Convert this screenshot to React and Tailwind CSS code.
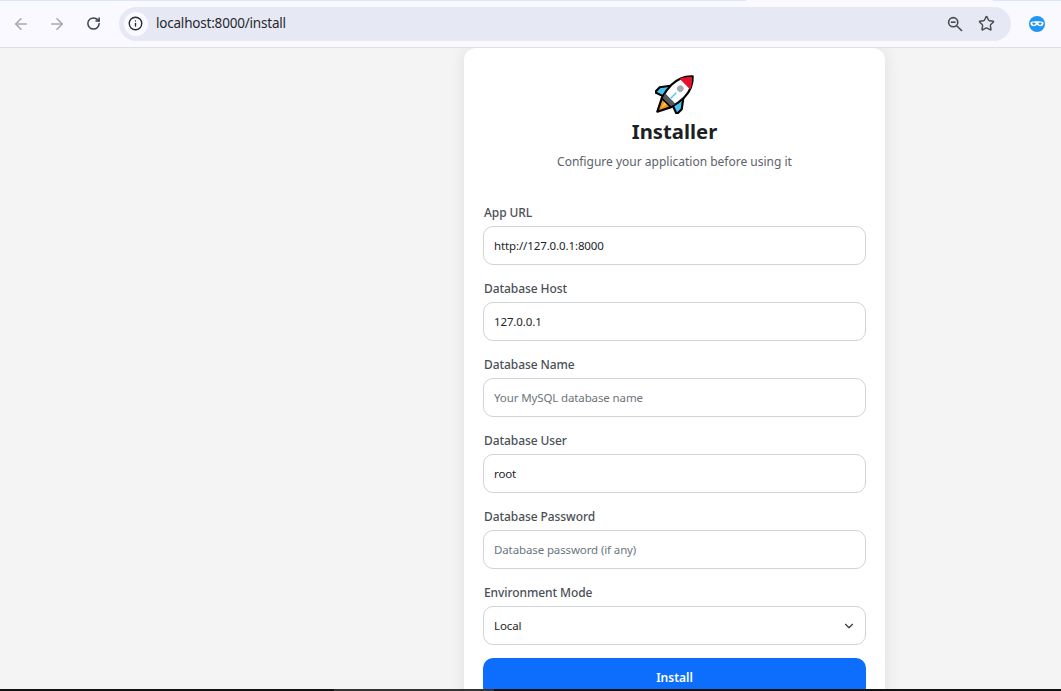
import React from "react";
import { ArrowLeft, ArrowRight, RotateCw, Info, Star, ChevronDown } from "lucide-react";

const Rocket = () => (
  <svg width="40" height="40" viewBox="0 0 40 40" className="block">
    <g transform="rotate(45 20 20)" stroke="#000" strokeWidth="2.200" strokeLinejoin="round">
      <path d="M20 45 L13.500 32 L26.500 32 Z" fill="#f7931e" />
      <path d="M20 39 L18 33 L22 33 Z" fill="#ffc83d" stroke="none" />
      <path d="M12 16 L4.500 26 L4.500 33 L13 30 Z" fill="#45c3f2" />
      <path d="M28 16 L35.500 26 L35.500 33 L27 30 Z" fill="#45c3f2" />
      <path d="M20 -5 C26.500 1 29 8 29 16 C29 22 28 27 26.500 32 L13.500 32 C12 27 11 22 11 16 C11 8 13.500 1 20 -5 Z" fill="#fff" />
      <path d="M20 -4 C24 -0.500 26.500 3 27.500 6 L12.500 6 C13.500 3 16 -0.500 20 -4 Z" fill="#e8112d" stroke="none" />
      <path d="M12.800 26.500 L27.200 26.500 L26 31.500 L14 31.500 Z" fill="#55585c" stroke="none" />
      <path d="M20 18 L20 26" stroke="#45c3f2" strokeWidth="1.300" fill="none" />
      <circle cx="20" cy="12.500" r="3.300" fill="#a8abae" stroke="none" />
    </g>
  </svg>
);

const NinjaIcon = () => (
  <svg width="16" height="16" viewBox="0 0 16 16" className="block">
    <circle cx="8" cy="8" r="8" fill="#2196f3" />
    <path d="M1.500 6.200 C4 4.800 12 4.800 14.500 6.200 C15 8.500 13.500 10.300 11.200 10.300 C9.800 10.300 9 9 8 9 C7 9 6.200 10.300 4.800 10.300 C2.500 10.300 1 8.500 1.500 6.200 Z" fill="#fff" />
    <ellipse cx="4.900" cy="7.600" rx="1.600" ry="1.200" fill="#2196f3" />
    <ellipse cx="11.100" cy="7.600" rx="1.600" ry="1.200" fill="#2196f3" />
  </svg>
);

// chrome's zoom glyph, smaller lens than the lucide one
const ZoomGlyph = () => (
  <svg width="16" height="16" viewBox="0 0 16 16" fill="none" stroke="#474a50" strokeWidth="1.600" className="block ml-auto">
    <circle cx="6.200" cy="6.200" r="4.600" />
    <path d="M9.700 9.700 L15 15" />
    <path d="M3.800 6.200 L8.600 6.200" />
  </svg>
);

const Field = ({ label, children }) => (
  <div className="flex flex-col">
    <label className="pl-[1px] text-[12px] leading-[18px] font-medium tracking-[-0.08px] text-[#495057] mb-[4px]">{label}</label>
    {children}
  </div>
);

const TextInput = ({ value, placeholder }) => (
  <input
    type="text"
    readOnly
    value={value}
    placeholder={placeholder}
    className="w-full h-[39px] px-[10px] bg-white border border-[#ced4da] rounded-[10px] text-[11.500px] tracking-[-0.12px] text-[#212529] placeholder:text-[#6c757d] outline-none"
  />
);

export default function App() {
  return (
    <div className="h-[691px] overflow-hidden flex flex-col bg-[#f4f4f4] font-['Noto_Sans','Open_Sans',sans-serif]">
      {/* browser toolbar */}
      <div className="relative h-[48px] shrink-0 bg-[#f9f9ff] border-b border-[#dfe0e4] flex items-center pl-[12px] pr-[16px]">
        <div className="absolute left-0 top-0 h-[1px] w-[746px] bg-[#dce6fb]" />
        <div className="absolute right-0 top-0 h-[1px] w-[68px] bg-[#dce6fb]" />
        <ArrowLeft size={18} strokeWidth={2.200} className="text-[#a9abb0]" />
        <ArrowRight size={18} strokeWidth={2.200} className="text-[#a9abb0] ml-[18px]" />
        <RotateCw size={15} strokeWidth={2.400} className="text-[#3c4350] ml-[20px]" />
        <div className="ml-[18px] h-[34px] w-[893px] rounded-full bg-[#e6e9f4] flex items-center pl-[5px] pr-[16px]">
          <div className="w-[24px] h-[24px] rounded-full bg-[#f9f9ff] flex items-center justify-center">
            <Info size={15} strokeWidth={2.200} className="text-[#272a30]" />
          </div>
          <span className="ml-[8px] text-[13.500px] tracking-[-0.2px] text-[#26282d]">localhost:8000/install</span>
          <ZoomGlyph />
          <Star size={17} strokeWidth={2} className="ml-[15px] text-[#474a50]" />
        </div>
        <div className="ml-[18px]">
          <NinjaIcon />
        </div>
      </div>

      {/* page */}
      <div className="relative flex-1 min-h-0 flex justify-center overflow-hidden pl-[288px]">
        <div className="w-[421px] h-[700px] shrink-0 bg-white rounded-t-[12px] shadow-[0_0_16px_rgba(0,0,0,0.09)] px-[19px] pt-[26px]">
          <div className="flex flex-col items-center">
            <Rocket />
            <h1 className="mt-[3px] text-[20.300px] leading-[28px] font-bold text-[#1c1f23]">Installer</h1>
            <p className="mt-[8px] text-[12px] leading-[18px] text-[#5c636a]">Configure your application before using it</p>
          </div>
          <div className="mt-[33px] flex flex-col gap-[15px]">
            <Field label="App URL">
              <TextInput value="http://127.0.0.1:8000" />
            </Field>
            <Field label="Database Host">
              <TextInput value="127.0.0.1" />
            </Field>
            <Field label="Database Name">
              <TextInput placeholder="Your MySQL database name" />
            </Field>
            <Field label="Database User">
              <TextInput value="root" />
            </Field>
            <Field label="Database Password">
              <TextInput placeholder="Database password (if any)" />
            </Field>
            <Field label="Environment Mode">
              <div className="h-[39px] px-[10px] bg-white border border-[#ced4da] rounded-[10px] flex items-center justify-between text-[11.500px] tracking-[-0.12px] text-[#212529]">
                <span>Local</span>
                <ChevronDown size={14} strokeWidth={2} className="text-[#343a40] mr-[-1px]" />
              </div>
            </Field>
          </div>
          <button className="mt-[13px] w-full h-[39px] bg-[#0d6efd] text-white text-[12px] font-semibold rounded-[10px]">
            Install
          </button>
        </div>
      </div>

      {/* window edge */}
      <div className="h-[2px] shrink-0 bg-[#111] flex">
        <div className="ml-[334px] w-[160px] bg-[#333]" />
      </div>
    </div>
  );
}
